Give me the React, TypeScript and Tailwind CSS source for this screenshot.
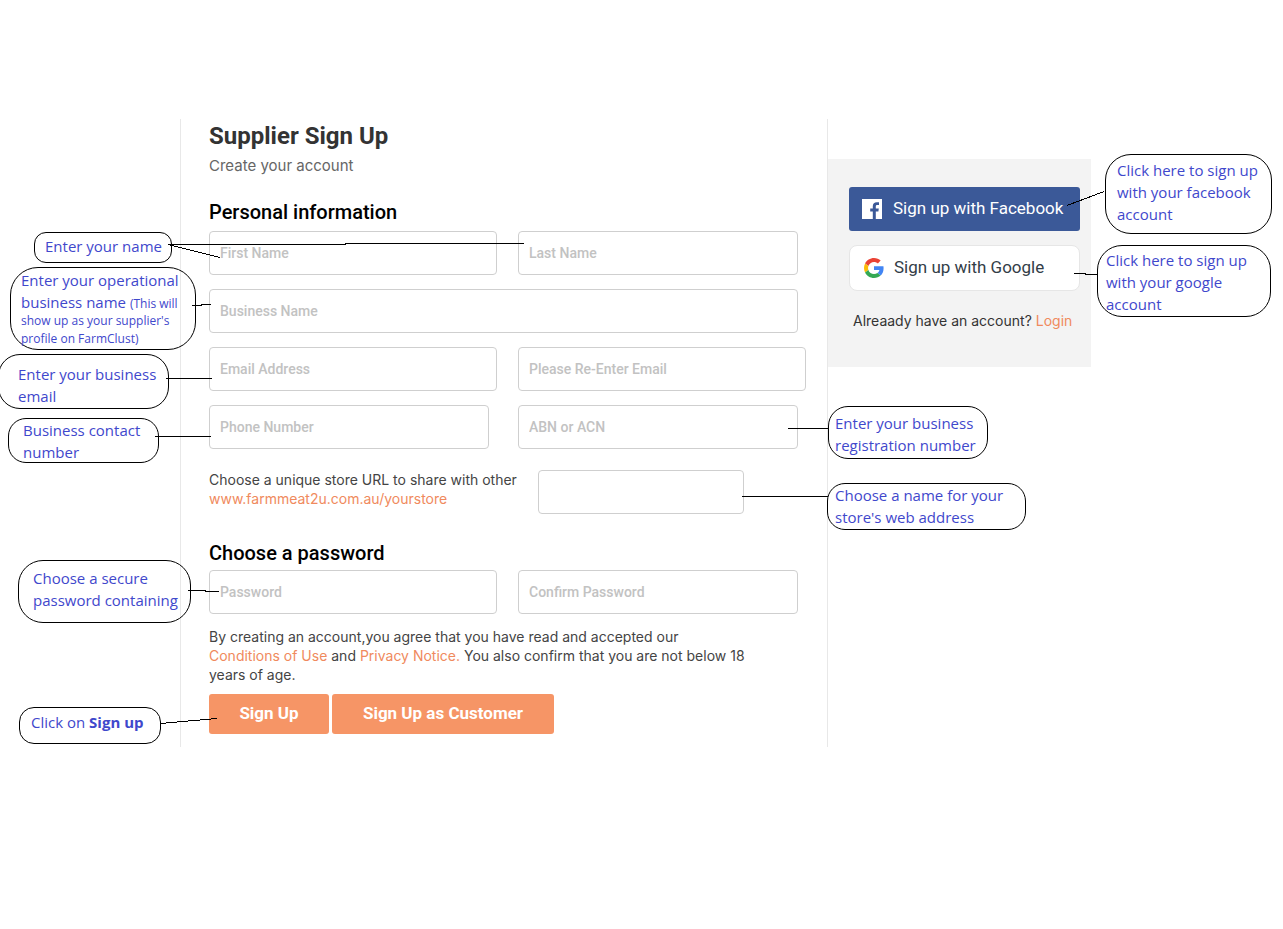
import type { ComponentProps, ReactNode } from "react";
import { clsx } from "clsx";

function Field({
  label,
  className,
  ...props
}: ComponentProps<"input"> & { label: string }) {
  return (
    <input
      aria-label={label}
      className={clsx(
        "h-11 rounded-[4px] border border-[#cfcfcf] bg-white px-[10px] text-sm font-medium text-gray-700 outline-none placeholder:text-[#c2c2c2]",
        className,
      )}
      {...props}
    />
  );
}

function FormLink({ children }: { children: ReactNode }) {
  return (
    <a href="#" className="text-[#f08a5d]">
      {children}
    </a>
  );
}

function Callout({
  className,
  children,
}: {
  className: string;
  children: ReactNode;
}) {
  return (
    <aside
      className={clsx(
        "absolute border border-black font-['Open_Sans','Noto_Sans',sans-serif] text-[15px] leading-[22px] whitespace-nowrap text-[#3f48cc]",
        className,
      )}
    >
      {children}
    </aside>
  );
}

function FacebookIcon() {
  return (
    <svg className="size-5" viewBox="0 0 20 20" aria-hidden="true">
      <path
        fill="#fff"
        d="M0 0h20v20h-6.2v-7.6h2.6l.4-3h-3V7.5c0-.9.3-1.5 1.5-1.5H17V3.3c-.3 0-1.2-.1-2.3-.1-2.3 0-3.9 1.4-3.9 4v2.2H8.2v3h2.6V20H0z"
      />
    </svg>
  );
}

function GoogleIcon() {
  return (
    <svg className="size-5" viewBox="0 0 48 48" aria-hidden="true">
      <path
        fill="#EA4335"
        d="M24 9.5c3.54 0 6.71 1.22 9.21 3.6l6.85-6.85C35.9 2.38 30.47 0 24 0 14.62 0 6.51 5.38 2.56 13.22l7.98 6.19C12.43 13.72 17.74 9.5 24 9.5z"
      />
      <path
        fill="#4285F4"
        d="M46.98 24.55c0-1.57-.15-3.09-.38-4.55H24v9.02h12.94c-.58 2.96-2.26 5.48-4.78 7.18l7.73 6c4.51-4.18 7.09-10.36 7.09-17.65z"
      />
      <path
        fill="#FBBC05"
        d="M10.53 28.59c-.48-1.45-.76-2.99-.76-4.59s.27-3.14.76-4.59l-7.98-6.19C.92 16.46 0 20.12 0 24c0 3.88.92 7.54 2.56 10.78l7.97-6.19z"
      />
      <path
        fill="#34A853"
        d="M24 48c6.48 0 11.93-2.13 15.89-5.81l-7.73-6c-2.15 1.45-4.92 2.3-8.16 2.3-6.26 0-11.57-4.22-13.47-9.91l-7.98 6.19C6.51 42.62 14.62 48 24 48z"
      />
    </svg>
  );
}

// Leader lines from each callout to the control it explains
const leaders = [
  "168,244 220,257",
  "168,244 345,244 345,243 524,243",
  "192,305 201,305 201,304 211,304",
  "166,378 212,378",
  "155,436 211,436",
  "188,590 205,590 205,591 219,591",
  "160,723 217,718",
  "1067,205 1104,191",
  "1074,273 1085,273 1085,274 1097,274",
  "788,428 828,428",
  "742,496 828,496",
];

function SignUpForm() {
  return (
    <form className="w-full max-w-[648px] border-x border-[#e8e8e8] pr-5 pb-[13px] pl-7">
      <h1 className="pt-px text-2xl leading-8 font-bold text-[#333]">
        Supplier Sign Up
      </h1>
      <p className="mt-1 font-[Inter,sans-serif] text-[15px] leading-5 text-[#666]">
        Create your account
      </p>
      <h2 className="mt-6 text-xl leading-6 font-medium text-black">
        Personal information
      </h2>
      <div className="mt-[7px] grid grid-cols-[288px_288px] gap-x-[21px] gap-y-[14px]">
        <Field label="First Name" placeholder="First Name" />
        <Field label="Last Name" placeholder="Last Name" className="mr-2" />
        <Field
          label="Business Name"
          placeholder="Business Name"
          className="col-span-2 mr-2"
        />
        <Field label="Email Address" type="email" placeholder="Email Address" />
        <Field
          label="Please Re-Enter Email"
          type="email"
          placeholder="Please Re-Enter Email"
        />
        <Field
          label="Phone Number"
          type="tel"
          placeholder="Phone Number"
          className="mr-2"
        />
        <Field label="ABN or ACN" placeholder="ABN or ACN" className="mr-2" />
      </div>
      <div className="mt-[21px] flex gap-[13px]">
        <label
          htmlFor="store"
          className="w-[316px] font-[Inter,sans-serif] text-sm leading-[19px] whitespace-nowrap text-[#444]"
        >
          Choose a unique store URL to share with other
          <br />
          <FormLink>www.farmmeat2u.com.au/yourstore</FormLink>
        </label>
        <Field id="store" label="Store URL" className="w-[206px]" />
      </div>
      <h2 className="mt-[27px] text-xl leading-6 font-medium text-black">
        Choose a password
      </h2>
      <div className="mt-[5px] grid grid-cols-[288px_288px] gap-x-[21px]">
        <Field label="Password" type="password" placeholder="Password" />
        <Field
          label="Confirm Password"
          type="password"
          placeholder="Confirm Password"
          className="mr-2"
        />
      </div>
      <p className="mt-[13px] font-[Inter,sans-serif] text-sm leading-[19px] whitespace-nowrap text-[#444]">
        By creating an account,you agree that you have read and accepted our
        <br />
        <FormLink>Conditions of Use</FormLink> and{" "}
        <FormLink>Privacy Notice.</FormLink> You also confirm that you are not
        below 18
        <br />
        years of age.
      </p>
      <div className="mt-[10px] flex gap-[3px] text-[17px] font-bold text-white">
        <button
          type="submit"
          className="h-10 w-[120px] rounded-[3px] bg-[#f69566]"
        >
          Sign Up
        </button>
        <button
          type="button"
          className="h-10 w-[222px] rounded-[3px] bg-[#f69566]"
        >
          Sign Up as Customer
        </button>
      </div>
    </form>
  );
}

function SocialPanel() {
  return (
    <section className="mt-10 w-[263px] bg-[#f3f3f3] px-[21px] pt-7 pb-9">
      <div className="flex w-[231px] flex-col gap-[14px] text-[17px]">
        <button
          type="button"
          className="flex h-11 items-center gap-[11px] rounded-[3px] bg-[#3b5998] px-[13px] whitespace-nowrap text-white"
        >
          <FacebookIcon />
          Sign up with Facebook
        </button>
        <button
          type="button"
          className="flex h-[46px] items-center gap-[10px] rounded-lg border border-[#e6e6e6] bg-white px-[14px] whitespace-nowrap text-[#333d47]"
        >
          <GoogleIcon />
          Sign up with Google
        </button>
      </div>
      <p className="mt-5 ml-1 font-[Inter,sans-serif] text-sm leading-5 whitespace-nowrap text-[#333]">
        Alreaady have an account? <FormLink>Login</FormLink>
      </p>
    </section>
  );
}

export default function App() {
  return (
    <main className="relative min-h-screen overflow-hidden bg-white pt-[119px] pl-[180px] font-[Roboto,sans-serif]">
      <div className="flex items-start">
        <SignUpForm />
        <SocialPanel />
      </div>

      <Callout className="top-[232px] left-[34px] h-[31px] w-[138px] rounded-[12px] px-[10px] pt-[2px]">
        Enter your name
      </Callout>
      <Callout className="top-[267px] left-[10px] h-[83px] w-[186px] rounded-[28px] px-[10px] pt-px">
        Enter your operational
        <br />
        business name <span className="text-xs">(This will</span>
        <span className="-mt-px block text-xs leading-[18px]">
          show up as your supplier's
          <br />
          profile on FarmClust)
        </span>
      </Callout>
      <Callout className="top-[354px] -left-[2px] h-[55px] w-[171px] rounded-[22px] px-[19px] pt-[8px]">
        Enter your business
        <br />
        email
      </Callout>
      <Callout className="top-[418px] left-[8px] h-[45px] w-[151px] rounded-[18px] px-[14px]">
        Business contact
        <br />
        number
      </Callout>
      <Callout className="top-[560px] left-[18px] h-[63px] w-[173px] rounded-[25px] px-[14px] pt-[6px]">
        Choose a secure
        <br />
        password containing
      </Callout>
      <Callout className="top-[707px] left-[19px] h-[37px] w-[142px] rounded-[15px] px-[11px] pt-[3px]">
        Click on <b>Sign up</b>
      </Callout>
      <Callout className="top-[154px] left-[1105px] h-[80px] w-[167px] rounded-[26px] px-[11px] pt-[4px]">
        Click here to sign up
        <br />
        with your facebook
        <br />
        account
      </Callout>
      <Callout className="top-[245px] left-[1097px] h-[72px] w-[174px] rounded-[25px] px-[8px] pt-[3px]">
        Click here to sign up
        <br />
        with your google
        <br />
        account
      </Callout>
      <Callout className="top-[406px] left-[828px] h-[53px] w-[160px] rounded-[20px] px-[6px] pt-[5px]">
        Enter your business
        <br />
        registration number
      </Callout>
      <Callout className="top-[483px] left-[827px] h-[47px] w-[199px] rounded-[18px] px-[7px]">
        Choose a name for your
        <br />
        store's web address
      </Callout>

      <svg
        className="pointer-events-none absolute top-0 left-0"
        width="1283"
        height="929"
        fill="none"
        stroke="#000"
        shapeRendering="crispEdges"
        aria-hidden="true"
      >
        {leaders.map((points) => (
          <polyline key={points} points={points} transform="translate(0 0.5)" />
        ))}
      </svg>
    </main>
  );
}
